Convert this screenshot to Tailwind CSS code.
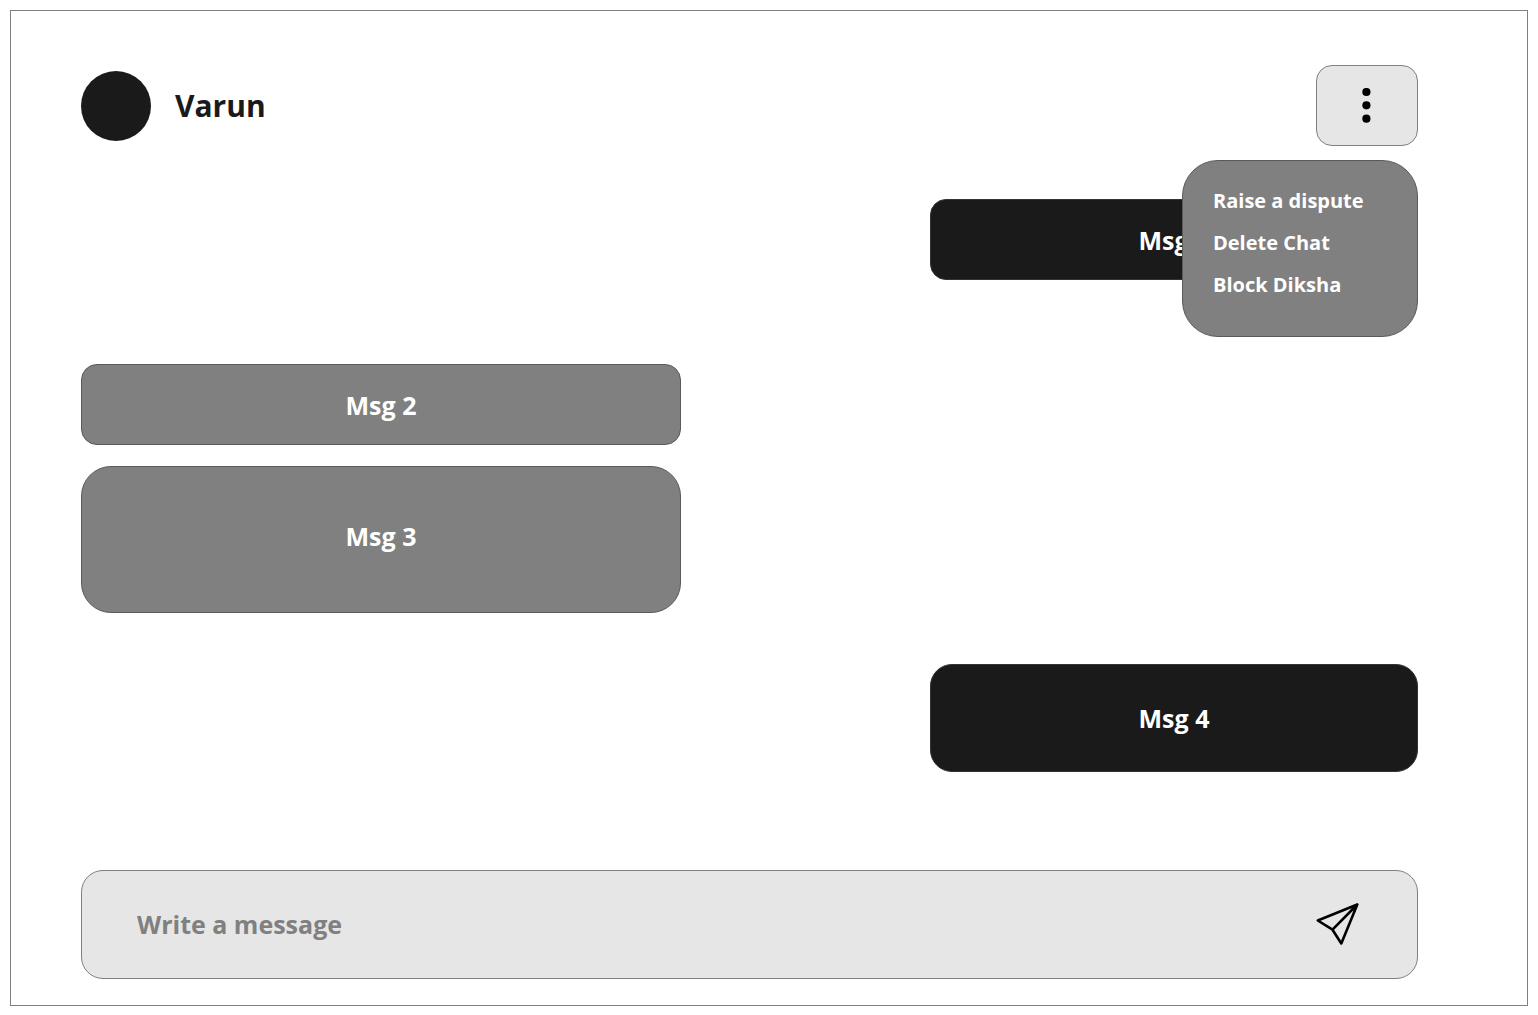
<!DOCTYPE html>
<html lang="en">
<head>
<meta charset="utf-8">
<meta name="viewport" content="width=device-width, initial-scale=1">
<title>Chat with Varun</title>
<script src="https://cdn.jsdelivr.net/npm/@tailwindcss/browser@4"></script>
</head>
<body class="min-h-screen bg-white p-[10px] pb-[9px] font-['Open_Sans',sans-serif]">
<main class="flex min-h-[calc(100vh-19px)] flex-col border border-[#808080] pt-[54px] pr-[109px] pb-[26px] pl-[70px]">
  <header class="relative z-10 flex items-center justify-between">
    <div class="flex items-center gap-6">
      <div class="size-[70px] rounded-full bg-[#1a1a1a]"></div>
      <h1 class="text-[30px] leading-10 font-bold text-[#1a1a1a]">Varun</h1>
    </div>
    <button type="button" aria-label="Chat options" aria-expanded="true" class="flex h-[81px] w-[102px] items-center justify-center rounded-2xl border border-[#808080] bg-[#e6e6e6]">
      <svg class="h-9 w-[10px]" viewBox="0 0 10 36" fill="#000" aria-hidden="true"><circle cx="4.400" cy="4" r="4.100"/><circle cx="4.400" cy="17.300" r="4.100"/><circle cx="4.400" cy="30.700" r="4.100"/></svg>
    </button>
    <div class="absolute top-full right-0 mt-[14px] flex h-[177px] w-[236px] flex-col items-start gap-[14px] rounded-[36px] border border-[#5a5a5a] bg-[#808080] pt-[26px] pl-[30px] text-[20px] leading-7 font-bold text-white">
      <button type="button">Raise a dispute</button>
      <button type="button">Delete Chat</button>
      <button type="button">Block Diksha</button>
    </div>
  </header>

  <section aria-label="Messages" class="flex grow flex-col pt-[53px] text-[25px] leading-9 font-bold text-white">
    <div class="flex h-[81px] w-full max-w-[488px] items-center justify-center self-end rounded-2xl border border-[#333] bg-[#1a1a1a]">Msg 1</div>
    <div class="mt-[84px] flex h-[81px] w-full max-w-[600px] items-center justify-center rounded-2xl border border-[#5a5a5a] bg-[#808080]">Msg 2</div>
    <div class="mt-[21px] flex h-[147px] w-full max-w-[600px] items-center justify-center rounded-[30px] border border-[#5a5a5a] bg-[#808080] pb-2">Msg 3</div>
    <div class="mt-[51px] flex h-[108px] w-full max-w-[488px] items-center justify-center self-end rounded-[22px] border border-[#333] bg-[#1a1a1a]">Msg 4</div>
  </section>

  <form class="mt-[98px] flex h-[109px] items-center rounded-[22px] border border-[#808080] bg-[#e6e6e6] pr-[57px] pb-[2px] pl-[55px]">
    <input type="text" aria-label="Write a message" placeholder="Write a message" class="h-12 min-w-0 grow bg-transparent text-[25px] font-bold text-[#1a1a1a] outline-none placeholder:text-[#808080]">
    <button type="submit" aria-label="Send" class="shrink-0">
      <svg class="size-11" viewBox="0 0 44 44" fill="none" stroke="#000" stroke-width="2.600" stroke-linejoin="round" stroke-linecap="round" aria-hidden="true"><path d="M41.300 2.500 L1.800 18.500 L16.500 27.700 L25.300 41.500 Z M41.300 2.500 L16.500 27.700"/></svg>
    </button>
  </form>
</main>
</body>
</html>
